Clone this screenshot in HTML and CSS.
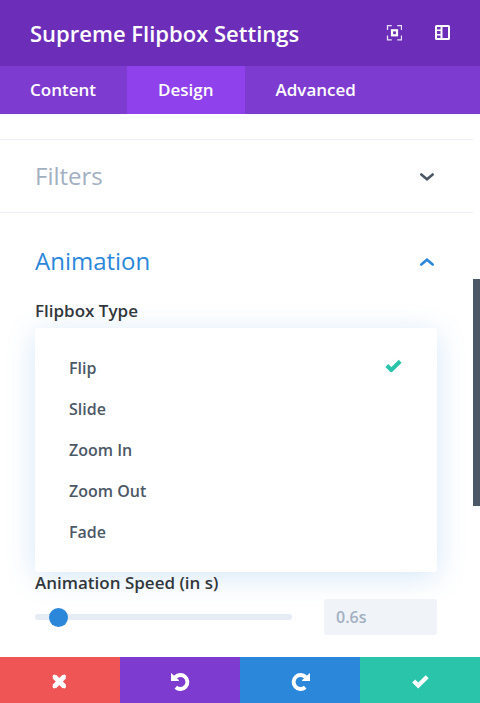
FILE: index.html
```html
<!DOCTYPE html>
<html lang="en">
<head>
<meta charset="utf-8">
<meta name="viewport" content="width=device-width, initial-scale=1">
<title>Supreme Flipbox Settings</title>
<link rel="stylesheet" href="styles.css">
</head>
<body>
<div class="modal">
  <header class="modal-header">
    <h1 class="modal-title">Supreme Flipbox Settings</h1>
    <div class="modal-tools">
      <button class="tool" type="button" aria-label="Expand">
        <svg width="16" height="16" viewBox="0 0 16 16" fill="none" stroke="currentColor">
          <path d="M1.5 5V.7h4.300M11.200.7h4.300V5M15.500 10.500v4.300h-4.300M5.800 14.800H1.500v-4.300" stroke-width="1.300" opacity=".85"/>
          <rect x="6" y="5.300" width="5" height="5" stroke-width="2.200"/>
        </svg>
      </button>
      <button class="tool" type="button" aria-label="Snap to side">
        <svg width="16" height="16" viewBox="0 0 16 16" fill="none" stroke="currentColor">
          <rect x="2" y="1" width="13" height="13" rx=".5" stroke-width="2"/>
          <path d="M7.500 1v13" stroke-width="2"/>
          <path d="M2 5.300h5M2 9.700h5" stroke-width="1.600"/>
        </svg>
      </button>
    </div>
  </header>
  <nav class="tabs">
    <button class="tab" type="button">Content</button>
    <button class="tab tab-active" type="button">Design</button>
    <button class="tab" type="button">Advanced</button>
  </nav>
  <main class="panel">
    <div class="sections">
      <section class="section section-filters">
        <button class="toggle" type="button" aria-expanded="false">
          <span>Filters</span>
          <svg class="chevron" width="16" height="10" viewBox="0 0 16 10"><path d="M2.3 2.5 8 7.3l5.7-4.8"/></svg>
        </button>
      </section>
      <section class="section section-animation">
        <button class="toggle toggle-open" type="button" aria-expanded="true">
          <span>Animation</span>
          <svg class="chevron" width="16" height="10" viewBox="0 0 16 10"><path d="M2.3 7.5 8 2.7l5.7 4.8"/></svg>
        </button>
        <div class="label type-label" id="type-label">Flipbox Type</div>
        <div class="options" role="listbox" aria-labelledby="type-label">
          <button class="option" type="button" role="option" aria-selected="true">
            <span>Flip</span>
            <svg class="check" width="18" height="18" viewBox="0 0 18 18"><path d="m1.800 6.500 4.500 4.500 8.900-8.700"/></svg>
          </button>
          <button class="option" type="button" role="option" aria-selected="false">Slide</button>
          <button class="option" type="button" role="option" aria-selected="false">Zoom In</button>
          <button class="option" type="button" role="option" aria-selected="false">Zoom Out</button>
          <button class="option" type="button" role="option" aria-selected="false">Fade</button>
        </div>
        <label class="label" for="speed">Animation Speed (in s)</label>
        <div class="speed">
          <input class="slider" id="speed" type="range" min="0" max="10" step="0.1" value="0.6">
          <input class="speed-value" type="text" value="0.6s" aria-label="Animation speed value">
        </div>
      </section>
    </div>
    <div class="scroll-track"><div class="scroll-thumb"></div></div>
  </main>
  <footer class="actions">
    <button class="action discard" type="button" aria-label="Discard">
      <svg width="20" height="20" viewBox="0 0 20 20"><path d="m4.300 4.500 10 10M14.300 4.500l-10 10" stroke-width="5"/><path d="m4.300 4.500 10 10M14.300 4.500l-10 10" stroke-width="3.600" stroke-linecap="round"/></svg>
    </button>
    <button class="action undo" type="button" aria-label="Undo">
      <svg width="20" height="20" viewBox="0 0 20 20"><path d="M5.300 5.200A7 7 0 1 1 5.800 15.300" stroke-width="3.900"/><path class="solid" d="M1.600 1.300Q1 .800 1 1.800V9h7.600q.8-.3.200-1L2.800 2.400z"/></svg>
    </button>
    <button class="action redo" type="button" aria-label="Redo">
      <svg width="20" height="20" viewBox="0 0 20 20"><path d="M15.700 5.200A7 7 0 1 0 15.200 15.300" stroke-width="3.900"/><path class="solid" d="M19.400 1.300q.6-.5.600.500V9h-7.600q-.8-.3-.2-1l6-5.600z"/></svg>
    </button>
    <button class="action save" type="button" aria-label="Save">
      <svg width="20" height="20" viewBox="0 0 20 20"><path d="m3.700 9 4.500 4.500 9-8.700" stroke-width="4.200"/></svg>
    </button>
  </footer>
</div>
</body>
</html>
```
FILE: styles.css
```css
* { box-sizing: border-box; }

body {
  margin: 0;
  font-family: "Open Sans", "Noto Sans", sans-serif;
  font-weight: 600;
  color: #32373c;
  background: #fff;
}

button, input { font: inherit; margin: 0; }

button {
  border: 0;
  padding: 0;
  color: inherit;
  background: none;
  cursor: pointer;
}

svg { display: block; }

.modal {
  display: flex;
  flex-direction: column;
  min-height: 100vh;
}

.modal-header {
  display: flex;
  flex: none;
  align-items: center;
  justify-content: space-between;
  height: 66px;
  padding: 0 30px;
  color: #fff;
  background: #6c2eb9;
}

.modal-title {
  margin: 0;
  font-size: 22px;
  font-weight: 600;
}

.modal-tools { display: flex; gap: 32px; }

.tabs {
  display: flex;
  flex: none;
  height: 48px;
  color: #fff;
  background: #7e3bd0;
}

.tab {
  padding: 0 31px 2px;
  font-size: 17px;
}

.tab:first-child { padding-left: 30px; }

.tab-active { background: #8f42ec; }

.panel {
  display: flex;
  flex: 1 0 auto;
}

.sections { flex: 1; min-width: 0; }

.section { padding: 0 36px 0 35px; }

.section-filters {
  margin-top: 25px;
  border-top: 1px solid #edf1f5;
  border-bottom: 1px solid #edf1f5;
}

.section-animation { padding-top: 12px; padding-bottom: 22px; }

.toggle {
  display: flex;
  align-items: center;
  justify-content: space-between;
  width: 100%;
  height: 72px;
  padding-bottom: 2px;
  font-size: 24px;
  font-weight: 400;
  color: #a2b0c1;
}

.toggle-open { color: #2b87da; }

.chevron {
  margin: 4px 2px 0 0;
  fill: none;
  stroke: #4c5866;
  stroke-width: 2.6;
  stroke-linecap: round;
}

.toggle-open .chevron { stroke: #2b87da; }

.label {
  display: block;
  position: relative;
  z-index: 1;
  font-size: 17px;
  line-height: 22px;
}

.type-label { margin-top: 3px; }

.options {
  margin-top: 6px;
  padding: 19px 34px 20px;
  border-radius: 3px;
  background: #fff;
  box-shadow: 0 5px 30px rgba(43, 135, 218, 0.2);
}

.option {
  display: flex;
  align-items: center;
  justify-content: space-between;
  width: 100%;
  height: 41px;
  font-size: 16px;
  color: #4c5866;
}

.check {
  fill: none;
  stroke: #29c4a9;
  stroke-width: 4;
  stroke-linejoin: round;
}

.speed {
  display: flex;
  align-items: center;
  gap: 32px;
  margin-top: 5px;
}

.slider {
  flex: 1;
  min-width: 0;
  height: 20px;
  appearance: none;
  background: none;
}

.slider::-webkit-slider-runnable-track {
  height: 6px;
  border-radius: 3px;
  background: #e6ecf4;
}

.slider::-webkit-slider-thumb {
  appearance: none;
  width: 19px;
  height: 19px;
  margin-top: -6px;
  border-radius: 50%;
  background: #2b87da;
}

.speed-value {
  width: 113px;
  height: 36px;
  padding: 0 12px;
  border: 0;
  border-radius: 3px;
  font-size: 16px;
  font-weight: 600;
  color: #a2b0c1;
  background: #f0f3f8;
}

.scroll-track { width: 7px; padding-top: 165px; }

.scroll-thumb { height: 227px; background: #4c5866; }

.actions {
  display: grid;
  flex: none;
  grid-template-columns: repeat(4, 1fr);
  height: 46px;
}

.action {
  display: grid;
  place-items: center;
  padding-top: 3px;
}

.action svg { fill: none; stroke: #fff; }

.action .solid { fill: #fff; stroke: none; }

.discard { background: #ef5555; }
.undo { background: #7e3bd0; }
.redo { background: #2b87da; }
.save { background: #29c4a9; }
```
